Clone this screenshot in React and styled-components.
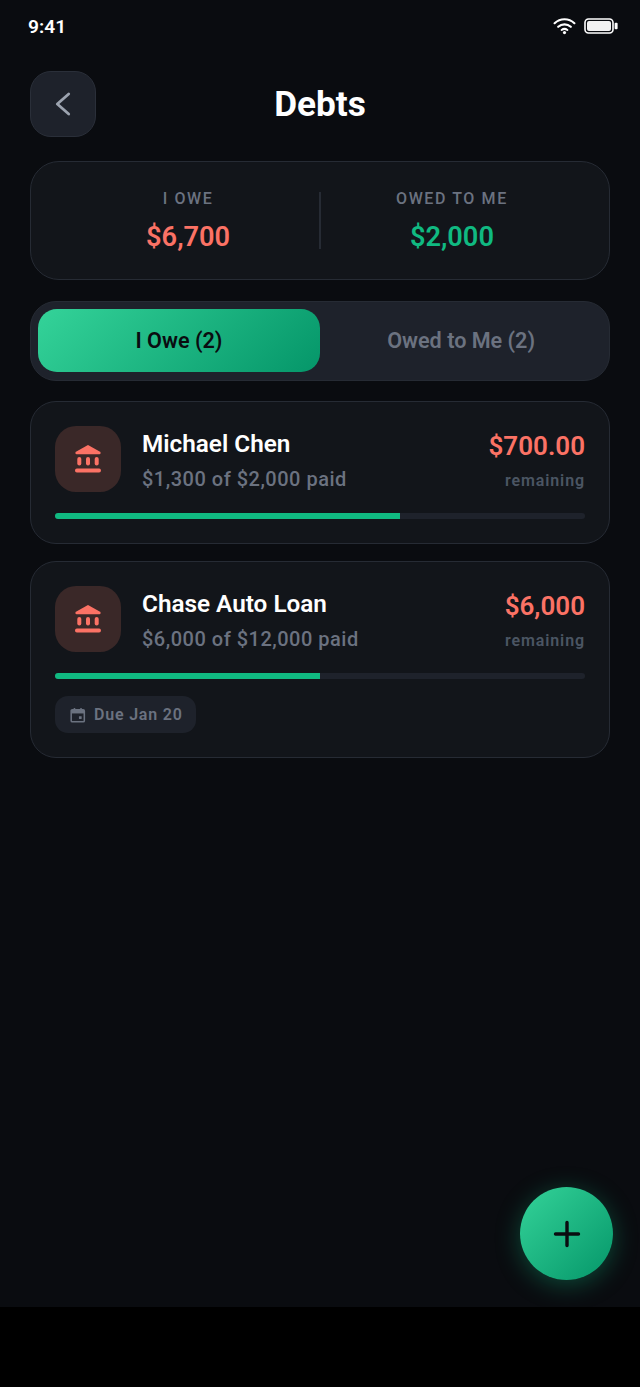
import React from "react";
import styled, { createGlobalStyle } from "styled-components";

const Global = createGlobalStyle`
  html, body { margin: 0; padding: 0; background: #000; }
  body { font-family: Roboto, "Liberation Sans", sans-serif; }
  * { box-sizing: border-box; }
`;

const Viewport = styled.div`
  width: 640px;
  height: 1387px;
  background: #000;
`;
const Screen = styled.div`
  position: relative;
  width: 640px;
  height: 1307px;
  background: #0a0c10;
  overflow: hidden;
`;
const StatusBar = styled.div`
  height: 53px;
  padding: 0 22.5px 0 28px;
  display: flex;
  justify-content: space-between;
  align-items: center;
`;
const Time = styled.span`
  font-size: 19.2px;
  font-weight: 600;
  color: #fff;
`;
const StatusIcons = styled.div`
  display: flex;
  align-items: center;
  gap: 8px;
  margin-top: -2px;
`;
const Content = styled.div`
  padding: 18px 30px 0;
  display: flex;
  flex-direction: column;
`;
const Header = styled.header`
  position: relative;
  height: 66px;
  display: flex;
  align-items: center;
  justify-content: center;
`;
const BackButton = styled.button`
  position: absolute;
  left: 0;
  top: 0;
  width: 66px;
  height: 66px;
  padding: 0;
  border-radius: 21px;
  background: #1e222b;
  border: 1.6px solid #2a2f39;
  display: flex;
  align-items: center;
  justify-content: center;
`;
const Title = styled.h1`
  margin: 0;
  font-size: 35.2px;
  font-weight: 700;
  color: #fff;
`;
const Summary = styled.section`
  margin-top: 24px;
  height: 119px;
  background: #12151a;
  border: 1.6px solid #262b34;
  border-radius: 29px;
  display: grid;
  grid-template-columns: 1fr 1.6px 1fr;
  align-items: center;
  padding: 0 26px;
`;
const SummaryCol = styled.div`
  padding-top: 2px;
  display: flex;
  flex-direction: column;
  align-items: center;
  gap: 12px;
`;
const SummaryLabel = styled.span`
  font-size: 16px;
  font-weight: 500;
  letter-spacing: 1.6px;
  color: #6b7280;
  line-height: 19px;
`;
const SummaryValue = styled.span`
  font-size: 27.2px;
  font-weight: 600;
  line-height: 34px;
  color: ${(p) => p.$color};
`;
const Divider = styled.div`
  width: 1.6px;
  height: 57px;
  background: #262b34;
`;
const Tabs = styled.div`
  margin-top: 20.7px;
  height: 80px;
  padding: 7.4px 6.8px;
  border-radius: 26px;
  background: #1e222b;
  border: 1.6px solid #262b34;
  display: grid;
  grid-template-columns: 1fr 1fr;
`;
const Tab = styled.div`
  display: flex;
  align-items: center;
  justify-content: center;
  border-radius: 19px;
  font-size: 21.6px;
  font-weight: 600;
  color: ${(p) => (p.$active ? "#0a0c10" : "#6b7280")};
  background: ${(p) =>
    p.$active ? "linear-gradient(135deg, #34d399 0%, #059669 100%)" : "transparent"};
`;
const List = styled.div`
  margin-top: 20.3px;
  display: flex;
  flex-direction: column;
  gap: 17px;
`;
const Card = styled.article`
  background: #12151a;
  border: 1.6px solid #262b34;
  border-radius: 26px;
  padding: 24px 24px 23.6px;
  display: flex;
  flex-direction: column;
`;
const Row = styled.div`
  display: flex;
  align-items: center;
  gap: 21px;
`;
const IconBox = styled.div`
  width: 66px;
  height: 66px;
  flex: none;
  border-radius: 21px;
  background: #3a2828;
  display: flex;
  align-items: center;
  justify-content: center;
`;
const Info = styled.div`
  flex: 1;
  padding-top: 3px;
  display: flex;
  flex-direction: column;
  gap: 7px;
`;
const Name = styled.span`
  font-size: 24.3px;
  font-weight: 600;
  line-height: 30px;
  color: #fff;
`;
const Sub = styled.span`
  font-size: 20px;
  font-weight: 500;
  line-height: 26px;
  letter-spacing: 0.5px;
  color: #6b7280;
`;
const Right = styled.div`
  padding-top: 4px;
  display: flex;
  flex-direction: column;
  align-items: flex-end;
  gap: 9px;
`;
const Amount = styled.span`
  font-size: 26px;
  font-weight: 600;
  line-height: 32px;
  color: #fb7265;
`;
const Remaining = styled.span`
  font-size: 16px;
  font-weight: 600;
  line-height: 20px;
  letter-spacing: 0.9px;
  color: #4b5563;
`;
const Track = styled.div`
  margin-top: 21px;
  height: 6.4px;
  border-radius: 4px;
  background: #1e222b;
  overflow: hidden;
`;
const Fill = styled.div`
  height: 100%;
  background: #10b981;
`;
const DuePill = styled.div`
  margin-top: 17px;
  align-self: flex-start;
  height: 36.7px;
  padding: 0 13px 0 15px;
  border-radius: 13px;
  background: #1e222b;
  display: flex;
  align-items: center;
  gap: 8.5px;
  font-size: 16px;
  font-weight: 600;
  letter-spacing: 0.8px;
  color: #6b7280;
`;
const Fab = styled.button`
  position: absolute;
  left: 520px;
  top: 1187px;
  width: 93px;
  height: 93px;
  padding: 0;
  border: none;
  border-radius: 50%;
  background: linear-gradient(135deg, #34d399 0%, #059669 100%);
  box-shadow: 0 4.8px 25px rgba(16, 185, 129, 0.35);
  display: flex;
  align-items: center;
  justify-content: center;
`;

const Bank = () => (
  <svg width="26" height="28" viewBox="0 0 26 28" fill="#fb7265">
    <path d="M13 0 L25.5 7 Q26 9.2 24.5 9.2 L1.5 9.2 Q0 9.2 .5 7 Z" />
    <rect x="2.3" y="12" width="4" height="8.6" rx="2" />
    <rect x="11" y="12" width="4" height="8.6" rx="2" />
    <rect x="19.7" y="12" width="4" height="8.6" rx="2" />
    <rect x="0" y="23.6" width="26" height="3.8" rx="1.9" />
  </svg>
);

const Calendar = () => (
  <svg width="15.5" height="16" viewBox="0 0 17 17" fill="none">
    <path
      d="M2.5 2.8h12a1.2 1.2 0 0 1 1.2 1.2v10.8a1.2 1.2 0 0 1-1.2 1.2h-12a1.2 1.2 0 0 1-1.2-1.2V4a1.2 1.2 0 0 1 1.2-1.2Z"
      stroke="#6b7280"
      strokeWidth="1.7"
    />
    <path d="M1.5 3h14v3.8h-14z" fill="#6b7280" />
    <rect x="4" y="0.8" width="1.8" height="3" rx=".6" fill="#6b7280" />
    <rect x="11.2" y="0.8" width="1.8" height="3" rx=".6" fill="#6b7280" />
    <rect x="9.8" y="9.8" width="3" height="3" rx=".4" fill="#6b7280" />
  </svg>
);

const debts = [
  { id: 1, name: "Michael Chen", sub: "$1,300 of $2,000 paid", amount: "$700.00", pct: 65 },
  { id: 2, name: "Chase Auto Loan", sub: "$6,000 of $12,000 paid", amount: "$6,000", pct: 50, due: "Due Jan 20" },
];

export default function App() {
  return (
    <Viewport>
      <Global />
      <Screen>
        <StatusBar>
          <Time>9:41</Time>
          <StatusIcons>
            <svg width="23" height="18" viewBox="0 0 23 18" fill="none" stroke="#fff" strokeLinecap="round">
              <path d="M1.6 6.2C7.2 .9 15.8 .9 21.4 6.2" strokeWidth="2.2" />
              <path d="M5.2 9.8c3.6-3.3 9-3.3 12.6 0" strokeWidth="2.2" />
              <path d="M8.6 13c1.8-1.4 4-1.4 5.8 0" strokeWidth="2" />
              <circle cx="11.5" cy="15.6" r="1.6" fill="#fff" stroke="none" />
            </svg>
            <svg width="34" height="16" viewBox="0 0 34 16">
              <rect x="1" y="1" width="28" height="14" rx="3.5" fill="none" stroke="#fff" strokeWidth="1.6" />
              <rect x="3" y="3" width="24" height="10" rx="2" fill="#f2f2f2" />
              <rect x="30.6" y="4.8" width="3" height="6.4" rx="1" fill="#fff" />
            </svg>
          </StatusIcons>
        </StatusBar>
        <Content>
          <Header>
            <BackButton aria-label="Back">
              <svg width="32" height="32" viewBox="0 0 32 32" fill="none" stroke="#9ca3af" strokeWidth="2.8" strokeLinecap="round" strokeLinejoin="round">
                <path d="M21.7 6 L10.3 16 L21.7 26" />
              </svg>
            </BackButton>
            <Title>Debts</Title>
          </Header>
          <Summary>
            <SummaryCol>
              <SummaryLabel>I OWE</SummaryLabel>
              <SummaryValue $color="#fb7265">$6,700</SummaryValue>
            </SummaryCol>
            <Divider />
            <SummaryCol>
              <SummaryLabel>OWED TO ME</SummaryLabel>
              <SummaryValue $color="#10b981">$2,000</SummaryValue>
            </SummaryCol>
          </Summary>
          <Tabs>
            <Tab $active>I Owe (2)</Tab>
            <Tab>Owed to Me (2)</Tab>
          </Tabs>
          <List>
            {debts.map((d) => (
              <Card key={d.id}>
                <Row>
                  <IconBox>
                    <Bank />
                  </IconBox>
                  <Info>
                    <Name>{d.name}</Name>
                    <Sub>{d.sub}</Sub>
                  </Info>
                  <Right>
                    <Amount>{d.amount}</Amount>
                    <Remaining>remaining</Remaining>
                  </Right>
                </Row>
                <Track>
                  <Fill style={{ width: `${d.pct}%` }} />
                </Track>
                {d.due && (
                  <DuePill>
                    <Calendar />
                    {d.due}
                  </DuePill>
                )}
              </Card>
            ))}
          </List>
        </Content>
        <Fab aria-label="Add">
          <svg width="32" height="32" viewBox="0 0 32 32" fill="none" stroke="#0a0c10" strokeWidth="3.4" strokeLinecap="round">
            <path d="M16 4.5v23M4.5 16h23" />
          </svg>
        </Fab>
      </Screen>
    </Viewport>
  );
}
